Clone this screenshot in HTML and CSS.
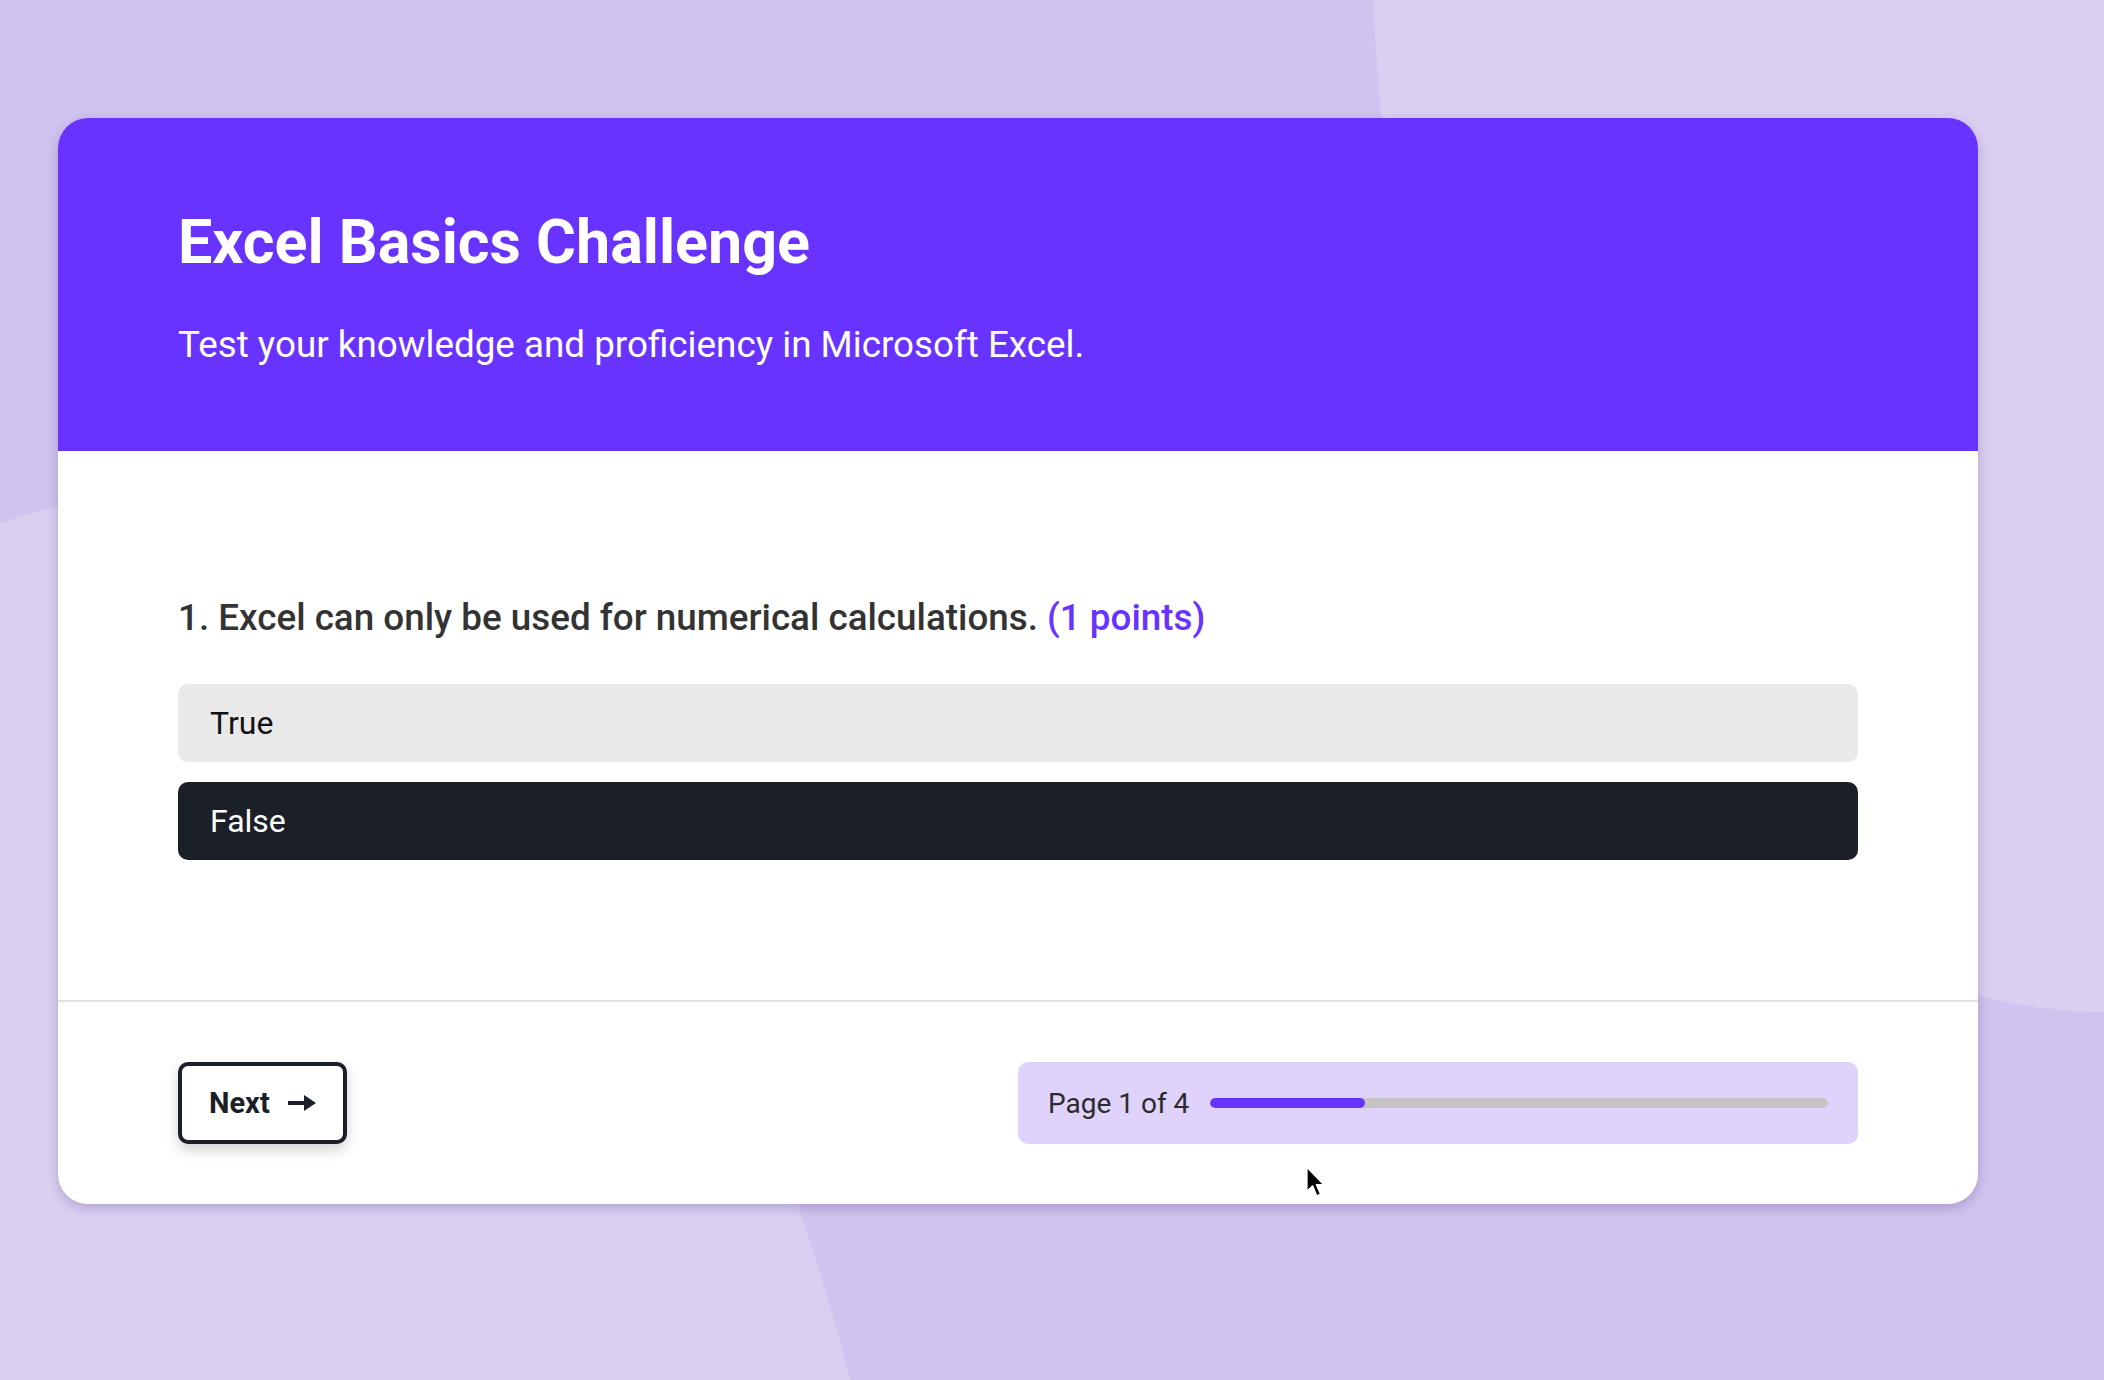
FILE: index.html
```html
<!DOCTYPE html>
<html lang="en">
<head>
    <meta charset="UTF-8">
    <meta name="viewport" content="width=device-width, initial-scale=1.0">
    <title>Excel Basics Challenge</title>
    <link rel="stylesheet" href="styles.css">
</head>
<body>
    <main class="quiz-card">
        <header class="quiz-header">
            <h1>Excel Basics Challenge</h1>
            <p>Test your knowledge and proficiency in Microsoft Excel.</p>
        </header>

        <section class="quiz-body">
            <h2 class="question">1. Excel can only be used for numerical calculations. <span class="points">(1 points)</span></h2>
            <div class="options">
                <button class="option">True</button>
                <button class="option selected">False</button>
            </div>
        </section>

        <footer class="quiz-footer">
            <button class="next-btn">
                Next
                <svg class="arrow" width="28" height="20" viewBox="0 0 28 20">
                    <line x1="0" y1="10" x2="19" y2="10" stroke="#1b2028" stroke-width="4"/>
                    <polygon points="16,2 28,10 16,18" fill="#1b2028"/>
                </svg>
            </button>
            <div class="progress">
                <span class="progress-label">Page 1 of 4</span>
                <div class="track">
                    <div class="fill" style="width: 25%"></div>
                </div>
            </div>
        </footer>
    </main>

    <!-- mouse pointer -->
    <svg class="pointer" width="21" height="34" viewBox="0 0 18 29">
        <path d="M1.5 1.5 L1.5 23 L6.5 18 L10 26.5 L13.5 25 L10 17 L16.5 17 Z" fill="#000" stroke="#fff" stroke-width="1.5" stroke-linejoin="round"/>
    </svg>
</body>
</html>
```

FILE: styles.css
```css
html, body {
    margin: 0;
    height: 100%;
}
body {
    position: relative;
    overflow: hidden;
    font-family: Roboto, "Noto Sans", Arial, sans-serif;
    background-color: #cfc3ef;
    background-image:
        radial-gradient(738px 1054px at 2110px -40px, #dacef1 99.7%, rgba(218, 206, 241, 0) 100%),
        radial-gradient(808px 1705px at 143px 2200px, #dacef1 99.8%, rgba(218, 206, 241, 0) 100%);
    background-repeat: no-repeat;
    padding: 118px 0 0 58px;
    box-sizing: border-box;
}
.quiz-card {
    width: 1920px;
    background-color: #fff;
    border-radius: 30px;
    overflow: hidden;
    box-shadow: 0 4px 12px rgba(40, 20, 90, 0.22);
}
.quiz-header {
    background-color: #6933ff;
    color: #fff;
    padding: 86px 120px 85px;
}
.quiz-header h1 {
    margin: 0 0 44px;
    font-size: 61px;
    line-height: 76px;
    font-weight: 700;
}
.quiz-header p {
    margin: 0;
    font-size: 36.8px;
    line-height: 42px;
}
.quiz-body {
    padding: 145px 120px 140px;
}
.question {
    margin: 0 0 45px;
    font-size: 36.8px;
    line-height: 43px;
    font-weight: 500;
    color: #333;
}
.points {
    color: #6933ff;
}
.options {
    display: flex;
    flex-direction: column;
    gap: 20px;
}
.option {
    display: block;
    width: 100%;
    text-align: left;
    border: none;
    border-radius: 10px;
    padding: 16px 32px;
    font-family: inherit;
    font-size: 32px;
    line-height: 46px;
    background-color: #e9e9e9;
    color: #111;
    cursor: pointer;
}
.option.selected {
    background-color: #1b2028;
    color: #fff;
}
.quiz-footer {
    border-top: 2px solid #e3e3e3;
    padding: 60px 120px;
    display: flex;
    justify-content: space-between;
    align-items: center;
}
.next-btn {
    display: flex;
    align-items: center;
    gap: 18px;
    height: 82px;
    box-sizing: border-box;
    padding: 0 27px;
    border: 4px solid #1b2028;
    border-radius: 10px;
    background-color: #fff;
    color: #1b2028;
    font-family: inherit;
    font-size: 29px;
    font-weight: 700;
    box-shadow: 0 6px 14px rgba(0, 0, 0, 0.18);
    cursor: pointer;
}
.arrow {
    display: block;
}
.progress {
    width: 50%;
    height: 82px;
    box-sizing: border-box;
    padding: 0 30px;
    display: flex;
    align-items: center;
    gap: 21px;
    background-color: #dfd3fc;
    border-radius: 10px;
}
.progress-label {
    font-size: 28px;
    color: #2b2b2b;
    white-space: nowrap;
}
.track {
    flex: 1;
    height: 10px;
    border-radius: 5px;
    background-color: #c4c4c4;
    overflow: hidden;
}
.fill {
    height: 100%;
    border-radius: 5px;
    background-color: #6933ff;
}
.pointer {
    position: absolute;
    left: 1305px;
    top: 1165px;
}
```
